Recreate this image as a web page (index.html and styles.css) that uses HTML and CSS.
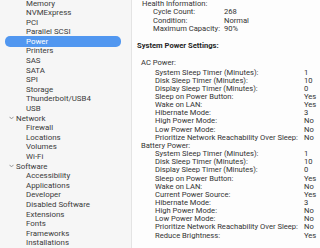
FILE: index.html
```html
<!DOCTYPE html>
<html>
<head>
    <meta charset="utf-8">
    <title>System Information</title>
    <link rel="stylesheet" href="styles.css">
</head>
<body>

<div class="window">
	<div class="sidebar">
		<ul class="tree">
			<li>Memory</li>
			<li>NVMExpress</li>
			<li>PCI</li>
			<li>Parallel SCSI</li>
			<li class="active">Power</li>
			<li>Printers</li>
			<li>SAS</li>
			<li>SATA</li>
			<li>SPI</li>
			<li>Storage</li>
			<li>Thunderbolt/USB4</li>
			<li>USB</li>
			<li class="group"><i class="chevron"><svg width="5" height="4" viewBox="0 0 5 4"><path d="M0.5 0.8 L2.5 2.9 L4.5 0.8" fill="none" stroke="#8a8a8a" stroke-width="0.9"/></svg></i>Network</li>
			<li>Firewall</li>
			<li>Locations</li>
			<li>Volumes</li>
			<li>Wi-Fi</li>
			<li class="group"><i class="chevron"><svg width="5" height="4" viewBox="0 0 5 4"><path d="M0.5 0.8 L2.5 2.9 L4.5 0.8" fill="none" stroke="#8a8a8a" stroke-width="0.9"/></svg></i>Software</li>
			<li>Accessibility</li>
			<li>Applications</li>
			<li>Developer</li>
			<li>Disabled Software</li>
			<li>Extensions</li>
			<li>Fonts</li>
			<li>Frameworks</li>
			<li>Installations</li>
		</ul>
	</div>

	<div class="report">
		<div class="health">
			<div class="row">Health Information:</div>
			<dl class="kv short">
				<dt>Cycle Count:</dt><dd>268</dd>
				<dt>Condition:</dt><dd>Normal</dd>
				<dt>Maximum Capacity:</dt><dd>90%</dd>
			</dl>
		</div>

		<h3>System Power Settings:</h3>

		<div class="power ac">
			<div class="row">AC Power:</div>
			<dl class="kv long">
				<dt>System Sleep Timer (Minutes):</dt><dd>1</dd>
				<dt>Disk Sleep Timer (Minutes):</dt><dd>10</dd>
				<dt>Display Sleep Timer (Minutes):</dt><dd>0</dd>
				<dt>Sleep on Power Button:</dt><dd>Yes</dd>
				<dt>Wake on LAN:</dt><dd>Yes</dd>
				<dt>Hibernate Mode:</dt><dd>3</dd>
				<dt>High Power Mode:</dt><dd>No</dd>
				<dt>Low Power Mode:</dt><dd>No</dd>
				<dt>Prioritize Network Reachability Over Sleep:</dt><dd>No</dd>
			</dl>
		</div>

		<div class="power">
			<div class="row">Battery Power:</div>
			<dl class="kv long">
				<dt>System Sleep Timer (Minutes):</dt><dd>1</dd>
				<dt>Disk Sleep Timer (Minutes):</dt><dd>10</dd>
				<dt>Display Sleep Timer (Minutes):</dt><dd>0</dd>
				<dt>Sleep on Power Button:</dt><dd>Yes</dd>
				<dt>Wake on LAN:</dt><dd>No</dd>
				<dt>Current Power Source:</dt><dd>Yes</dd>
				<dt>Hibernate Mode:</dt><dd>3</dd>
				<dt>High Power Mode:</dt><dd>No</dd>
				<dt>Low Power Mode:</dt><dd>No</dd>
				<dt>Prioritize Network Reachability Over Sleep:</dt><dd>No</dd>
				<dt>Reduce Brightness:</dt><dd>Yes</dd>
			</dl>
		</div>
	</div>
</div>

</body>
</html>
```

FILE: styles.css
```css
*{ margin:0; padding:0;}
li{ list-style: none;}
html,body{ width:320px; height:248px; overflow:hidden;}
body{ font-family: Roboto, "Liberation Sans", Arial, sans-serif; font-size:7.6px; color:#333;}

.window{ display:flex; width:320px; height:248px; overflow:hidden;}

/* sidebar */
.sidebar{ width:131px; flex:none; background:#f6f6f6; border-right:1px solid #e4e4e4; overflow:hidden;}
.tree{ margin-top:-1.5px;}
.tree li{ display:flex; align-items:center; height:9.6px; padding-left:26px; font-size:7.9px; line-height:9.6px; color:#3a3a3a; white-space:nowrap;}
.tree li.group{ padding-left:9px;}
.tree li.active{ height:10.4px; margin:-0.4px 10px -0.4px 5px; padding-left:21px; border-radius:5px; background:#5197f0; color:#fff;}
.chevron{ display:flex; width:6px; margin-right:1px;}

/* report */
.report{ flex:1; padding-left:5px; background:#fdfdfd; overflow:hidden; white-space:nowrap;}
.row{ line-height:8.15px;}
.report h3{ margin:8.7px 0 0; font-size:7.6px; line-height:8.15px; font-weight:bold; color:#262626;}

.health{ margin-left:5px; padding-top:0.2px;}
.kv{ display:grid; line-height:8.15px;}
.kv dd{ margin:0;}
.kv.short{ grid-template-columns:auto auto; justify-content:start; column-gap:4px; margin-left:11px;}
.kv.long{ grid-template-columns:149px auto; margin-left:14px;}

.power{ margin-left:4px;}
.power.ac{ margin-top:9.4px;}
.power.ac .row{ margin-bottom:1.3px;}
```
